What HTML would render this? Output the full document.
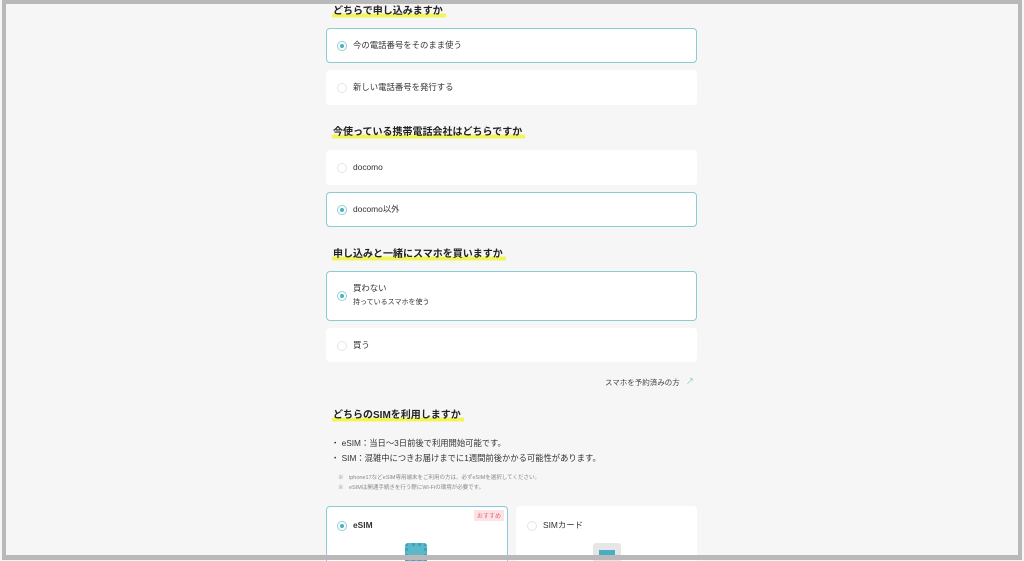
<!DOCTYPE html>
<html><head><meta charset="utf-8"><style>
*{box-sizing:border-box;margin:0;padding:0}
body{width:1024px;height:561px;overflow:hidden;background:#fff;font-family:"Liberation Sans","Noto Sans CJK JP",sans-serif;color:#333;position:relative}
.frame{position:absolute;left:0;top:0;width:1024px;height:561px;background:#f6f6f6;overflow:hidden}
.bd{position:absolute;left:2px;top:0;width:1020px;height:560px;border:4px solid #b9b9b9;border-bottom-width:5px}
.a{position:absolute}
.h{position:absolute;font-size:10px;font-weight:bold;color:#222;line-height:14px;background:linear-gradient(transparent 62%,#f2f55a 62%,#f2f55a 90%,transparent 90%);padding:0 3px 0 1px}
.card{position:absolute;left:326px;width:371px;background:#fff;border-radius:4px;border:1px solid #fff}
.card.sel{border:1px solid #88ccd4}
.r{position:absolute;left:10px;width:10px;height:10px;border-radius:50%;border:1px solid #e6e6e6;background:#fff}
.sel .r{border:1px solid #8fd0d8}
.sel .r::after{content:"";position:absolute;left:2px;top:2px;width:4px;height:4px;border-radius:50%;background:#4bb0c0}
.t{position:absolute;left:26px;font-size:8.4px;color:#333;line-height:12px}
</style></head><body><div class="frame">
<div class="h" style="top:5px;left:332px">どちらで申し込みますか</div>
<div class="card sel" style="top:28px;height:35px"><div class="r" style="top:12px"></div><div class="t" style="top:10px">今の電話番号をそのまま使う</div></div>
<div class="card" style="top:70px;height:35px"><div class="r" style="top:12px"></div><div class="t" style="top:10px">新しい電話番号を発行する</div></div>
<div class="h" style="top:126px;left:332px">今使っている携帯電話会社はどちらですか</div>
<div class="card" style="top:150px;height:35px"><div class="r" style="top:12px"></div><div class="t" style="top:10px">docomo</div></div>
<div class="card sel" style="top:192px;height:35px"><div class="r" style="top:12px"></div><div class="t" style="top:10px">docomo以外</div></div>
<div class="h" style="top:248px;left:332px">申し込みと一緒にスマホを買いますか</div>
<div class="card sel" style="top:271px;height:50px"><div class="r" style="top:19px"></div><div class="t" style="top:10px">買わない</div><div class="t" style="top:25px;font-size:7px">持っているスマホを使う</div></div>
<div class="card" style="top:328px;height:34px"><div class="r" style="top:12px"></div><div class="t" style="top:10px">買う</div></div>
<div class="a" style="top:377px;left:605px;font-size:7.5px;color:#444">スマホを予約済みの方</div>
<div class="a" style="top:376px;left:686px;font-size:8px;color:#6cc">↗</div>
<div class="h" style="top:409px;left:332px">どちらのSIMを利用しますか</div>
<div class="a" style="top:436px;left:331px;font-size:8.3px;color:#333;line-height:15px">・ eSIM：当日〜3日前後で利用開始可能です。<br>・ SIM：混雑中につきお届けまでに1週間前後かかる可能性があります。</div>
<div class="a" style="top:473px;left:338px;font-size:5.5px;color:#888;line-height:10px">※　iphone17などeSIM専用端末をご利用の方は、必ずeSIMを選択してください。<br>※　eSIMは開通手続きを行う際にWi-Fiの環境が必要です。</div>
<div class="card sel" style="top:506px;left:326px;width:182px;height:70px"><div class="r" style="top:14px"></div><div class="t" style="top:12px;font-weight:bold">eSIM</div>
<div class="a" style="top:3px;right:3px;background:#fde3e6;color:#e06a7a;font-size:6px;padding:1px 3px">おすすめ</div>
<div class="a" style="top:36px;left:78px;width:22px;height:20px;border:3px dotted #3ba6bb;border-radius:3px;background:#5bb8c9"></div></div>
<div class="card" style="top:506px;left:516px;width:181px;height:70px"><div class="r" style="top:14px"></div><div class="t" style="top:12px">SIMカード</div>
<div class="a" style="top:36px;left:76px;width:28px;height:20px;border-radius:3px;background:#e6e6e6"><div class="a" style="left:6px;top:7px;width:16px;height:10px;background:#4aaec0"></div></div></div>
</div><div class="bd"></div></body></html>
